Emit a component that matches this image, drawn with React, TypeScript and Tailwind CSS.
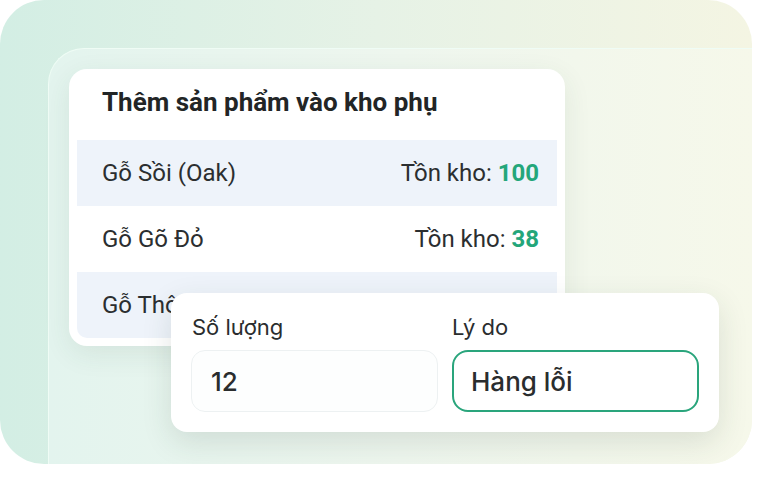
import React from "react"

const rows = [
  { name: "Gỗ Sồi (Oak)", stock: 100, shaded: true },
  { name: "Gỗ Gõ Đỏ", stock: 38, shaded: false },
  { name: "Gỗ Thông", stock: 54, shaded: true },
]

function StockRow({ name, stock, shaded, last }: { name: string; stock: number; shaded: boolean; last: boolean }) {
  return (
    <div
      className={`flex h-[66px] items-center justify-between pl-[25px] pr-[18px] text-[24px] text-[#2b2e30] ${
        shaded ? "bg-[#eef3fa]" : "bg-white"
      } ${last ? "rounded-b-[10px]" : ""}`}
    >
      <span>{name}</span>
      <span>
        Tồn kho: <span className="font-bold text-[#23a67a]">{stock}</span>
      </span>
    </div>
  )
}

function QuantityForm() {
  return (
    <div className="absolute left-[122px] top-[244px] w-[548px] rounded-[16px] bg-white px-5 pt-5 pb-5 shadow-[0_10px_30px_rgba(40,60,50,0.13)] font-['Inter',sans-serif] text-[#2a2d2e]">
      <div className="grid grid-cols-2 gap-x-[14px]">
        <label className="pl-px text-[22px] leading-[28px]">Số lượng</label>
        <label className="text-[22px] leading-[28px]">Lý do</label>
        <div className="mt-[9px] flex h-[62px] items-center rounded-[14px] border border-[#edf1f2] bg-[#fdfefe] pl-[19px] text-[26px] font-medium">
          12
        </div>
        <div className="mt-[9px] flex h-[62px] items-center rounded-[16px] border-2 border-[#2aa57c] bg-white pl-[17px] text-[26px] font-medium">
          Hàng lỗi
        </div>
      </div>
    </div>
  )
}

export default function App() {
  return (
    <div className="h-[496px] w-[766px] bg-white font-['Roboto',sans-serif]">
      <div className="flex h-[464px] w-[752px] overflow-hidden rounded-[44px] bg-gradient-to-r from-[#d3eee4] via-[#e6f2e6] to-[#f4f5e3] pl-12 pt-12">
        <div className="relative flex-1 rounded-tl-[36px] border-l border-t border-[#effcf5] bg-gradient-to-r from-[#e3f4ee] via-[#eef6ee] to-[#f6f8ea] pl-5 pt-5">
          <div className="w-[496px] rounded-[18px] bg-white p-2 pt-0 shadow-[0_8px_28px_rgba(40,80,60,0.09)]">
            <h2 className="pl-[25px] pt-[17px] pb-[22px] text-[26px] font-bold leading-[32px] text-[#222526]">
              Thêm sản phẩm vào kho phụ
            </h2>
            {rows.map((r, i) => (
              <StockRow key={r.name} {...r} last={i === rows.length - 1} />
            ))}
          </div>
          <QuantityForm />
        </div>
      </div>
    </div>
  )
}
